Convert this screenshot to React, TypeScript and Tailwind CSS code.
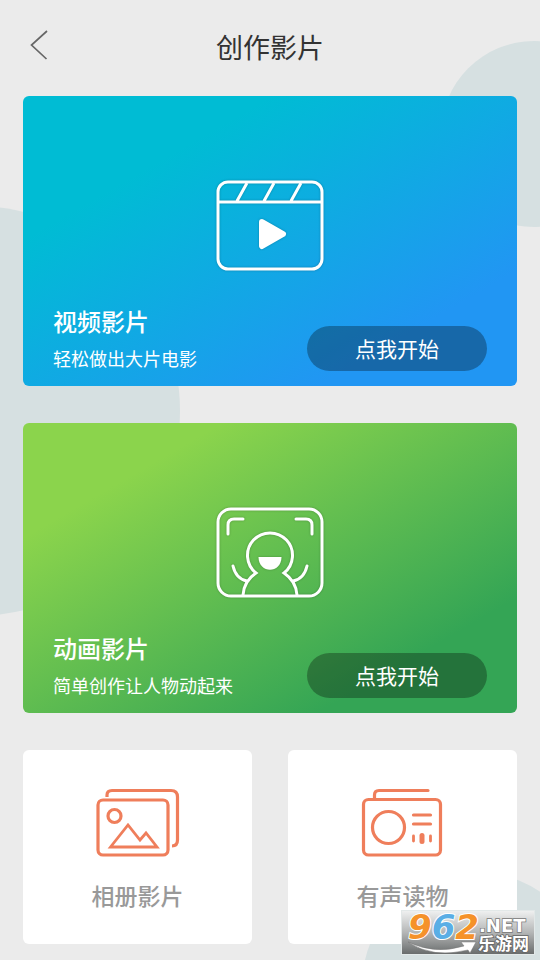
import React from 'react';

type StartCardProps = {
  title: string;
  subtitle: string;
  gradient: string;
  children: React.ReactNode;
};

function BackIcon() {
  return (
    <svg width="18" height="30" viewBox="0 0 18 30" fill="none" stroke="#666666" strokeWidth="1.7">
      <path d="M17 1L1.500 15L16.500 29" />
    </svg>
  );
}

function VideoIcon() {
  return (
    <svg
      width="110"
      height="92"
      viewBox="0 0 110 92"
      fill="none"
      stroke="white"
      strokeWidth="3"
      className="drop-shadow-[0_0_1px_rgba(0,0,0,0.25)]"
    >
      <rect x="3" y="2" width="104" height="87" rx="10" />
      <path d="M3 22H107M32 3L22 21M59 3L49 21M86 3L76 21" />
      <path d="M47 42L68 54L47 66Z" fill="white" strokeWidth="6" strokeLinejoin="round" />
    </svg>
  );
}

function AnimationIcon() {
  return (
    <svg
      width="110"
      height="92"
      viewBox="0 0 110 92"
      fill="none"
      stroke="white"
      strokeWidth="3"
      strokeLinecap="round"
      className="drop-shadow-[0_0_1px_rgba(0,0,0,0.25)]"
    >
      <rect x="3" y="2" width="104" height="87" rx="13" />
      <path d="M13 27V18Q13 12 19 12H28M81 12H91Q97 12 97 18V27" />
      <path d="M28 88Q29 74 41 66A22.500 22.500 0 1 1 69 66Q81 74 82 88" />
      <path d="M18 59Q21 72 32 74M92 59Q89 72 78 74" />
      <path d="M43.500 50H66.500C66.500 67 43.500 67 43.500 50Z" fill="white" stroke="none" />
    </svg>
  );
}

function AlbumIcon() {
  return (
    <svg width="84" height="70" viewBox="0 0 84 70" fill="none" stroke="#ef7e5b" strokeWidth="3.200">
      <rect x="2" y="12" width="70" height="55" rx="5" />
      <path d="M11 9V7Q11 2.500 16 2.500H75Q81.500 2.500 81.500 9V52Q81.500 58 76 58" />
      <circle cx="18.500" cy="28" r="6.500" />
      <path d="M14.500 59L32 37L44 52L50 45L61 59Z" strokeWidth="2.800" />
    </svg>
  );
}

function RadioIcon() {
  return (
    <svg width="84" height="70" viewBox="0 0 84 70" fill="none" stroke="#ef7e5b" strokeWidth="3.200" strokeLinecap="round">
      <rect x="2.500" y="11.500" width="77" height="55.500" rx="5" />
      <path d="M13.500 11V7Q13.500 2.500 18 2.500H67" />
      <circle cx="27.500" cy="39.500" r="16" />
      <path d="M52.500 27H69.500M52.500 36H69.500" />
      <path d="M52.500 48V53M69.500 48V53" strokeWidth="2.800" />
      <path d="M61 47.500V53.500" strokeWidth="5" />
    </svg>
  );
}

function StartCard({ title, subtitle, gradient, children }: StartCardProps) {
  return (
    <section className={`flex flex-col rounded-md text-white ${gradient}`}>
      <div className="flex justify-center pt-[84px] pb-[31px]">{children}</div>

      <div className="flex items-end justify-between px-[30px] pb-[15px]">
        <div>
          <h2 className="text-[24px] leading-[36px] font-medium">{title}</h2>
          <p className="mt-1.5 text-[18px] leading-[26px]">{subtitle}</p>
        </div>

        <button type="button" className="h-[45px] w-[180px] rounded-full bg-black/30 text-[21px]">
          点我开始
        </button>
      </div>
    </section>
  );
}

function SmallCard({ label, children }: { label: string; children: React.ReactNode }) {
  return (
    <button type="button" className="flex flex-col items-center rounded-md bg-white pt-[38px] pb-8">
      {children}
      <span className="mt-5 text-[23px] leading-[34px] font-medium text-[#999999]">{label}</span>
    </button>
  );
}

function SiteBadge() {
  return (
    <div className="absolute right-[5px] bottom-[5px]">
      <svg width="134" height="45" viewBox="0 0 134 45" className="overflow-visible">
        <defs>
          <linearGradient id="badge" x1="0" y1="0" x2="0" y2="1">
            <stop offset="0" stopColor="#f0f1f1" />
            <stop offset="0.5" stopColor="#b4b6b6" />
            <stop offset="1" stopColor="#686b6b" />
          </linearGradient>
        </defs>
        <rect x="0.5" y="0.5" width="133" height="44" fill="url(#badge)" stroke="#e2e8e8" />
        <text
          x="7"
          y="29"
          fontSize="34"
          fontFamily="DejaVu Sans, sans-serif"
          fontWeight="700"
          fontStyle="italic"
          fill="#f5922a"
          stroke="white"
          strokeWidth="2"
          paintOrder="stroke"
        >
          9<tspan fill="#5aaee5">6</tspan>2
        </text>
        <path d="M7 32Q34 45 63 36L60 32L75 32L69 43L67 40Q32 49 7 32Z" fill="white" stroke="#777777" strokeWidth="0.5" />
        <text
          x="78"
          y="22"
          fontSize="18"
          fontFamily="DejaVu Sans, sans-serif"
          fontWeight="700"
          fill="white"
          stroke="#777777"
          strokeWidth="1.500"
          paintOrder="stroke"
        >
          .NET
        </text>
        <text
          x="77"
          y="40"
          fontSize="17"
          fontFamily="Noto Sans CJK SC, sans-serif"
          fontWeight="700"
          fill="white"
          stroke="#666666"
          strokeWidth="1.500"
          paintOrder="stroke"
        >
          乐游网
        </text>
      </svg>
    </div>
  );
}

export default function App() {
  return (
    <div className="relative isolate min-h-screen overflow-hidden bg-[#ebebeb] font-['Noto_Sans_CJK_SC',sans-serif]">

      {/* Background circles */}
      <div className="absolute -z-10 top-[41px] -right-[87px] size-[186px] rounded-full bg-[#d6e0e1]" />
      <div className="absolute -z-10 top-[206px] -left-[230px] size-[410px] rounded-full bg-[#d6e0e1]" />
      <div className="absolute -z-10 top-[872px] -right-[50px] size-[228px] rounded-full bg-[#d6e0e1]" />

      {/* Header */}
      <header className="grid h-24 grid-cols-[48px_1fr_48px] items-center px-[30px] pb-0.5">
        <button type="button" aria-label="返回" className="-mt-1">
          <BackIcon />
        </button>
        <h1 className="text-center text-[27px] leading-[40px] text-[#333333]">创作影片</h1>
      </header>

      <main className="flex flex-col gap-[37px] px-[23px] pb-4">
        <StartCard
          title="视频影片"
          subtitle="轻松做出大片电影"
          gradient="bg-linear-[150deg,#00bcd4_25%,#2196f3_80%]"
        >
          <VideoIcon />
        </StartCard>

        <StartCard
          title="动画影片"
          subtitle="简单创作让人物动起来"
          gradient="bg-linear-[150deg,#8bd44c_20%,#34a555_80%]"
        >
          <AnimationIcon />
        </StartCard>

        <div className="grid grid-cols-2 gap-9">
          <SmallCard label="相册影片">
            <AlbumIcon />
          </SmallCard>
          <SmallCard label="有声读物">
            <RadioIcon />
          </SmallCard>
        </div>
      </main>

      <SiteBadge />
    </div>
  );
}
